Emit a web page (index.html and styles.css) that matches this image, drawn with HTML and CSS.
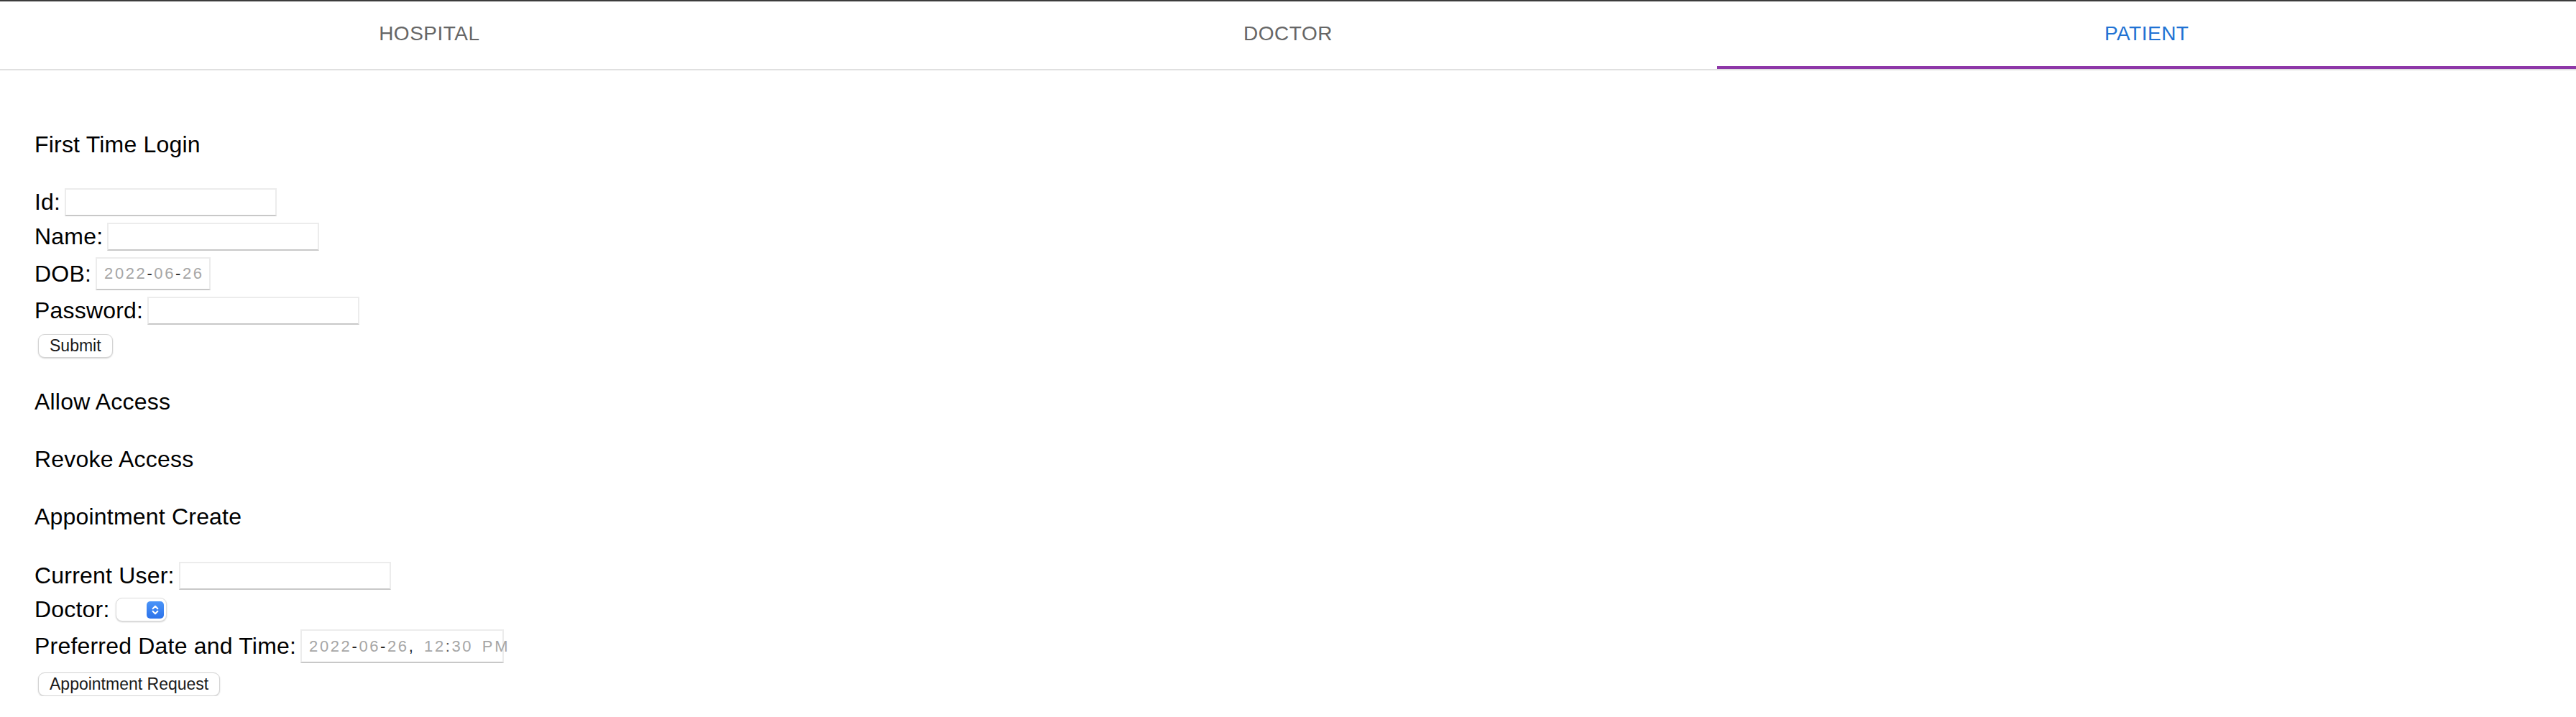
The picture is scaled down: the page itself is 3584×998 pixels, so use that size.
FILE: index.html
```html
<!DOCTYPE html>
<html lang="en">
<head>
<meta charset="utf-8">
<title>Patient</title>
<link rel="stylesheet" href="styles.css">
</head>
<body>
<header class="tabs">
  <div class="tab">HOSPITAL</div>
  <div class="tab">DOCTOR</div>
  <div class="tab tab-active">PATIENT<span class="indicator"></span></div>
</header>
<main class="panel">
  <h2 class="title">First Time Login</h2>
  <form class="form">
    <label class="row">Id:<input class="text-input" type="text"></label>
    <label class="row">Name:<input class="text-input" type="text"></label>
    <label class="row">DOB:<span class="date-field dob"><span class="dim">2022</span><span class="sep">-</span><span class="dim">06</span><span class="sep">-</span><span class="dim">26</span></span></label>
    <label class="row">Password:<input class="text-input" type="password"></label>
    <button class="btn" type="button">Submit</button>
  </form>
  <h2 class="title">Allow Access</h2>
  <h2 class="title">Revoke Access</h2>
  <h2 class="title">Appointment Create</h2>
  <form class="form">
    <label class="row">Current User:<input class="text-input" type="text"></label>
    <label class="row">Doctor:<span class="select-wrap"><select class="select"></select><svg class="stepper" width="24" height="24" viewBox="0 0 24 24"><defs><linearGradient id="bg" x1="0" y1="0" x2="0" y2="1"><stop offset="0" stop-color="#4a94f8"/><stop offset="1" stop-color="#2c72ea"/></linearGradient></defs><rect x="0" y="0" width="24" height="24" rx="5" fill="url(#bg)"/><path d="M8.6 10.2 L12 6.8 L15.4 10.2" fill="none" stroke="#fff" stroke-width="2" stroke-linecap="round" stroke-linejoin="round"/><path d="M8.6 13.8 L12 17.2 L15.4 13.8" fill="none" stroke="#fff" stroke-width="2" stroke-linecap="round" stroke-linejoin="round"/></svg></span></label>
    <label class="row">Preferred Date and Time:<span class="date-field dt"><span class="dim">2022</span><span class="sep">-</span><span class="dim">06</span><span class="sep">-</span><span class="dim">26</span><span class="sep">, </span><span class="dim">12</span><span class="colon">:</span><span class="dim">30 PM</span></span></label>
    <button class="btn" type="button">Appointment Request</button>
  </form>
</main>
</body>
</html>
```
FILE: styles.css
```css
html, body {
  margin: 0;
  background: #ffffff;
}

body {
  font-family: "Liberation Sans", Arial, sans-serif;
  color: #000000;
  overflow: hidden;
}

.tabs {
  display: flex;
  height: 94px;
  border-top: 2px solid #3c3c3c;
  border-bottom: 2px solid #e0e0e0;
}

.tab {
  flex: 1;
  position: relative;
  display: flex;
  align-items: center;
  justify-content: center;
  padding-bottom: 4px;
  font-size: 28px;
  letter-spacing: 0.5px;
  color: #666666;
}

.tab-active {
  color: #2172d3;
}

.indicator {
  position: absolute;
  left: 0;
  right: 0;
  bottom: 0;
  height: 4px;
  background: #8e37a8;
}

.panel {
  padding: 79px 0 0 48px;
  display: flex;
  flex-direction: column;
  align-items: flex-start;
}

.title {
  margin: 0;
  font-size: 32px;
  line-height: 48px;
  font-weight: normal;
  letter-spacing: 0.2px;
}

.title + .title {
  margin-top: 32px;
}

.form + .title {
  margin-top: 37px;
}

.title + .form {
  margin-top: 39px;
}

.title:first-child + .form {
  margin-top: 37px;
}

.form {
  display: flex;
  flex-direction: column;
  align-items: flex-start;
  gap: 9px;
}

.row {
  display: flex;
  align-items: center;
  font-size: 32px;
  line-height: 37px;
  letter-spacing: 0.2px;
}

.text-input {
  box-sizing: border-box;
  width: 295px;
  height: 39px;
  margin: 0 0 0 6px;
  padding: 0 8px;
  border: 2px solid #ececec;
  border-bottom-color: #c8c8c8;
  background: #ffffff;
  outline: none;
}

.date-field {
  box-sizing: border-box;
  display: inline-flex;
  align-items: center;
  margin-left: 6px;
  padding: 0 0 0 10px;
  border: 2px solid #ececec;
  border-bottom-color: #c8c8c8;
  font-size: 22px;
  line-height: 26px;
  letter-spacing: 2.6px;
  white-space: pre;
}

.dob {
  width: 160px;
  height: 46px;
}

.dt {
  width: 283px;
  height: 47px;
  word-spacing: 4px;
}

.dim {
  color: #a6a6a6;
}

.sep {
  color: #1e1e1e;
}

.colon {
  color: #555555;
}

.select-wrap {
  position: relative;
  display: inline-block;
  width: 71px;
  height: 33px;
  margin-left: 8px;
}

.select {
  appearance: none;
  -webkit-appearance: none;
  box-sizing: border-box;
  display: block;
  width: 71px;
  height: 33px;
  margin: 0;
  border: 1px solid #dcdcdc;
  border-radius: 9px;
  background: #ffffff;
  box-shadow: 0 1px 2px rgba(0, 0, 0, 0.2);
}

.stepper {
  position: absolute;
  right: 4px;
  top: 5px;
}

.btn {
  box-sizing: border-box;
  height: 33px;
  margin: 4px 0 0 5px;
  padding: 0 15px;
  border: 1px solid #d3d3d3;
  border-radius: 9px;
  background: #ffffff;
  box-shadow: 0 1px 2px rgba(0, 0, 0, 0.18);
  font-family: "Liberation Sans", Arial, sans-serif;
  font-size: 23px;
  color: #1a1a1a;
}
```
